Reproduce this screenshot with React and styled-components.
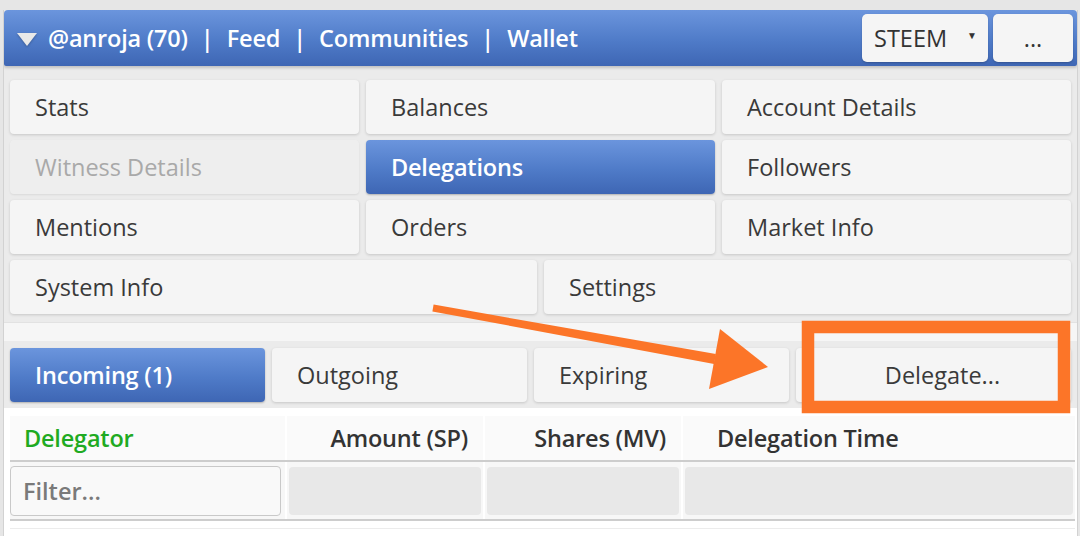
import React from "react";
import styled, { createGlobalStyle, css } from "styled-components";

const menuRows = [
  [
    { label: "Stats" },
    { label: "Balances" },
    { label: "Account Details" },
  ],
  [
    { label: "Witness Details", disabled: true },
    { label: "Delegations", active: true },
    { label: "Followers" },
  ],
  [{ label: "Mentions" }, { label: "Orders" }, { label: "Market Info" }],
  [{ label: "System Info" }, { label: "Settings" }],
];

const tabs = [
  { label: "Incoming (1)", active: true },
  { label: "Outgoing" },
  { label: "Expiring" },
];

const GlobalStyle = createGlobalStyle`
  html, body {
    margin: 0;
    padding: 0;
    background: #e6e6e6;
    font-family: "Open Sans", "Noto Sans", sans-serif;
    overflow: hidden;
  }
`;

const blueFill = css`
  background: linear-gradient(to bottom, #6b95dd 0%, #4f7bc8 55%, #3e66b4 100%);
  color: #fff;
`;

const Page = styled.div`
  position: relative;
  width: 1080px;
  height: 536px;
  padding-top: 10px;
  box-sizing: border-box;
  overflow: hidden;
`;

const Frame = styled.div`
  margin: 0 2px 0 3px;
  border-left: 1px solid #d2d2d2;
  border-right: 1px solid #d2d2d2;
  background: #ebebeb;
  height: 526px;
  overflow: hidden;
`;

const TopBar = styled.div`
  ${blueFill};
  height: 56px;
  border-radius: 4px 4px 2px 2px;
  display: flex;
  align-items: center;
  padding: 0 4px 0 13px;
  box-shadow: 0 2px 3px rgba(0, 0, 0, 0.18);
  position: relative;
  z-index: 1;
`;

const Caret = styled.span`
  width: 0;
  height: 0;
  border-left: 10px solid transparent;
  border-right: 10px solid transparent;
  border-top: 13px solid #e9e9e9;
  filter: drop-shadow(0 1px 1px rgba(0, 0, 0, 0.25));
  margin-right: 11px;
  margin-top: 2px;
`;

const NavText = styled.span`
  font-size: 23.5px;
  font-weight: 600;
  letter-spacing: -0.2px;
  white-space: pre;
`;

const Pipe = styled.span`
  font-size: 23.5px;
  font-weight: 600;
  margin: 0 13px;
`;

const BarButtons = styled.div`
  margin-left: auto;
  display: flex;
  gap: 5px;
`;

const BarButton = styled.div`
  width: ${(p) => p.$w}px;
  height: 48px;
  box-sizing: border-box;
  background: #f5f5f5;
  border-radius: 5px;
  color: #333;
  font-size: 23.5px;
  display: flex;
  align-items: center;
  justify-content: ${(p) => (p.$center ? "center" : "flex-start")};
  padding-left: ${(p) => (p.$center ? 0 : 12)}px;
  box-shadow: 0 1px 2px rgba(0, 0, 0, 0.2);
`;

const SmallArrow = styled.span`
  font-size: 10px;
  margin-left: 20px;
  margin-top: -6px;
`;

const MenuPanel = styled.div`
  display: flex;
  flex-direction: column;
  gap: 6px;
  padding: 14px 6px 8px 6px;
  background: #ebebeb;
`;

const MenuRow = styled.div`
  display: grid;
  grid-template-columns: repeat(${(p) => p.$cols}, 1fr);
  column-gap: 7px;
`;

const MenuButton = styled.div`
  height: 54px;
  border-radius: 4px;
  display: flex;
  align-items: center;
  padding-left: 25px;
  font-size: 23.5px;
  background: #f5f5f5;
  color: #3a3a3a;
  box-shadow: 0 1px 3px rgba(0, 0, 0, 0.16);
  ${(p) =>
    p.$disabled &&
    css`
      background: #eeeeee;
      color: #a9a9a9;
      box-shadow: 0 1px 2px rgba(0, 0, 0, 0.08);
    `}
  ${(p) =>
    p.$active &&
    css`
      ${blueFill};
      font-weight: 600;
      letter-spacing: -0.2px;
      box-shadow: 0 1px 2px rgba(0, 0, 0, 0.25);
    `}
`;

const Spacer = styled.div`
  height: 18px;
  background: #f6f6f6;
  border-top: 1px solid #e2e2e2;
`;

const TabBar = styled.div`
  display: grid;
  grid-template-columns: 255px 255px 255px 1fr;
  column-gap: 7px;
  padding: 7px 6px 6px 6px;
  background: #ebebeb;
`;

const Tab = styled(MenuButton)`
  ${(p) =>
    p.$centered &&
    css`
      justify-content: center;
      padding-left: 18px;
    `}
`;

const Table = styled.div`
  background: #fff;
  padding-top: 8px;
`;

const TableRow = styled.div`
  display: grid;
  grid-template-columns: 275px 196px 196px 1fr;
  column-gap: 2px;
  margin: 0 2px 0 6px;
  border-bottom: 2px solid #cdcdcd;
  background: #fff;
`;

const HeadCell = styled.div`
  height: 44px;
  background: #fafafa;
  display: flex;
  align-items: center;
  justify-content: ${(p) => (p.$right ? "flex-end" : "flex-start")};
  padding: 0 ${(p) => (p.$right ? 15 : 0)}px 0 ${(p) => p.$pl || 0}px;
  font-size: 23.5px;
  font-weight: 600;
  letter-spacing: -0.2px;
  color: ${(p) => (p.$sorted ? "#1faa22" : "#333")};
`;

const FilterCell = styled.div`
  height: 57px;
  background: #f7f7f7;
  display: flex;
  align-items: center;
  padding: 0 2px;
`;

const FilterInput = styled.input`
  width: 100%;
  height: 50px;
  box-sizing: border-box;
  border: 1px solid #c9c9c9;
  border-radius: 4px;
  background: #f9f9f9;
  font-family: "Open Sans", sans-serif;
  font-size: 23.5px;
  font-weight: 600;
  padding: 0 12px;
  color: #333;
  margin-left: -2px;
  &::placeholder {
    color: #7a7a7a;
  }
`;

const DisabledBox = styled.div`
  width: 100%;
  height: 48px;
  border-radius: 4px;
  background: #e8e8e8;
`;

const Rule = styled.div`
  margin: 7px 2px 0 6px;
  border-top: 1px solid #ececec;
  height: 20px;
`;

const Overlay = styled.svg`
  position: absolute;
  top: 0;
  left: 0;
  pointer-events: none;
`;

function Annotation() {
  const orange = "#fc7528";
  return (
    <Overlay width="1080" height="536" viewBox="0 0 1080 536">
      <polygon
        points="433.6,304.6 715.9,354.1 714.1,363.9 432.4,311.4"
        fill={orange}
      />
      <polygon points="720,329 768,367 709,389" fill={orange} />
      <rect
        x="808"
        y="327"
        width="256"
        height="80"
        fill="none"
        stroke={orange}
        strokeWidth="12.5"
      />
    </Overlay>
  );
}

export default function App() {
  return (
    <Page>
      <GlobalStyle />
      <Frame>
        <TopBar>
          <Caret />
          <NavText>@anroja (70)</NavText>
          <Pipe>|</Pipe>
          <NavText>Feed</NavText>
          <Pipe>|</Pipe>
          <NavText>Communities</NavText>
          <Pipe>|</Pipe>
          <NavText>Wallet</NavText>
          <BarButtons>
            <BarButton $w={126}>
              STEEM
              <SmallArrow>▼</SmallArrow>
            </BarButton>
            <BarButton $w={80} $center>
              ...
            </BarButton>
          </BarButtons>
        </TopBar>

        <MenuPanel>
          {menuRows.map((row, i) => (
            <MenuRow key={i} $cols={row.length}>
              {row.map((item) => (
                <MenuButton
                  key={item.label}
                  $active={item.active}
                  $disabled={item.disabled}
                >
                  {item.label}
                </MenuButton>
              ))}
            </MenuRow>
          ))}
        </MenuPanel>

        <Spacer />

        <TabBar>
          {tabs.map((t) => (
            <Tab key={t.label} $active={t.active}>
              {t.label}
            </Tab>
          ))}
          <Tab $centered>Delegate...</Tab>
        </TabBar>

        <Table>
          <TableRow>
            <HeadCell $sorted $pl={14}>
              Delegator
            </HeadCell>
            <HeadCell $right>Amount (SP)</HeadCell>
            <HeadCell $right>Shares (MV)</HeadCell>
            <HeadCell $pl={34}>Delegation Time</HeadCell>
          </TableRow>
          <TableRow>
            <FilterCell>
              <FilterInput placeholder="Filter..." />
            </FilterCell>
            <FilterCell>
              <DisabledBox />
            </FilterCell>
            <FilterCell>
              <DisabledBox />
            </FilterCell>
            <FilterCell>
              <DisabledBox />
            </FilterCell>
          </TableRow>
          <Rule />
        </Table>
      </Frame>
      <Annotation />
    </Page>
  );
}
